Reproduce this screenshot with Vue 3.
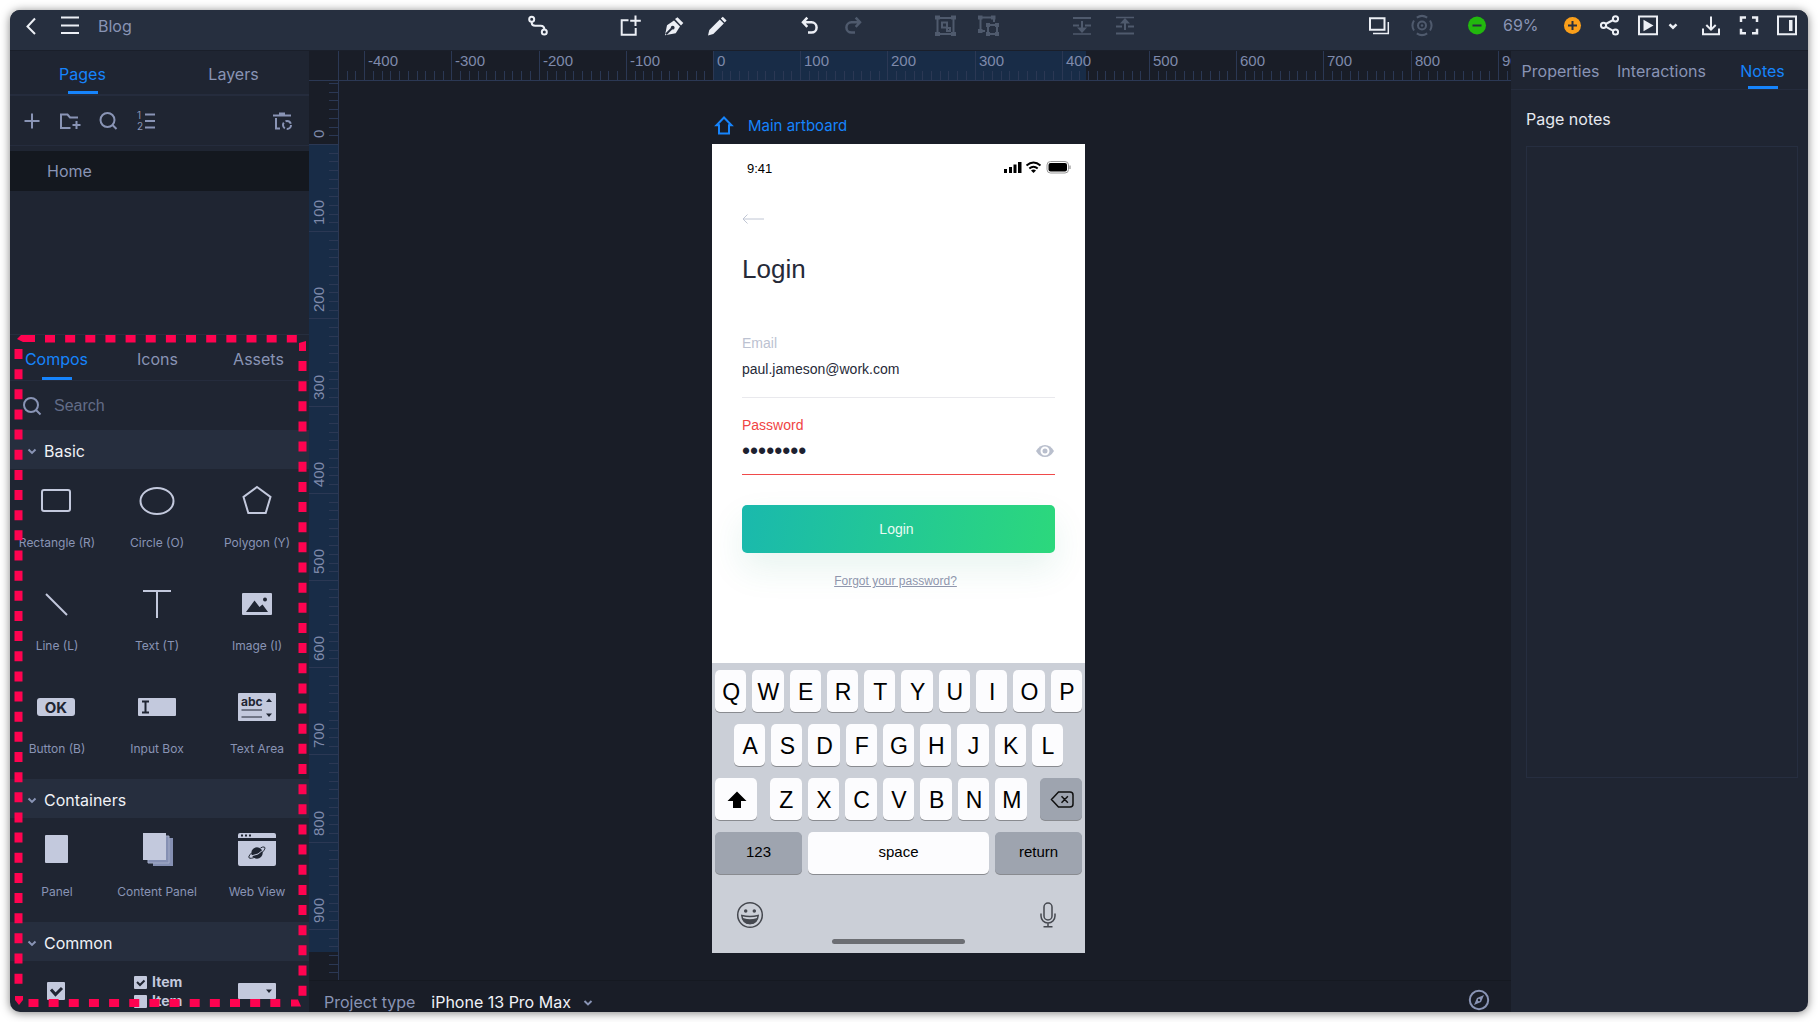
<script setup>
import { computed, onBeforeUnmount, onMounted, ref } from 'vue'

const UNIT = 87.2 / 100
const ORIGIN_X = 374
const ORIGIN_Y = 63
const BOARD_W = 373
const BOARD_H = 808

function buildTicks(origin, length) {
  const ticks = []
  const first = Math.ceil(-origin / UNIT / 10) * 10
  for (let v = first; ; v += 10) {
    const pos = Math.round(origin + v * UNIT)
    if (pos >= length) break
    if (pos > 0) ticks.push({ v, pos, major: v % 100 === 0 })
  }
  return ticks
}

const rulerX = ref(null)
const rulerY = ref(null)
const rulerWidth = ref(0)
const rulerHeight = ref(0)
const xTicks = computed(() => buildTicks(ORIGIN_X, rulerWidth.value))
const yTicks = computed(() => buildTicks(ORIGIN_Y, rulerHeight.value))

function measure() {
  rulerWidth.value = rulerX.value.clientWidth - 30
  rulerHeight.value = rulerY.value.clientHeight
}
onMounted(() => {
  measure()
  window.addEventListener('resize', measure)
})
onBeforeUnmount(() => window.removeEventListener('resize', measure))

const pageTab = ref('Pages')
const libTab = ref('Compos')
const sideTab = ref('Notes')
const notes = ref('')
const query = ref('')
const email = ref('paul.jameson@work.com')
const password = ref('password')
const device = ref('iPhone 13 Pro Max')

const sections = [
  {
    name: 'Basic',
    items: [
      ['rectangle', 'Rectangle (R)'], ['circle', 'Circle (O)'], ['polygon', 'Polygon (Y)'],
      ['line', 'Line (L)'], ['text', 'Text (T)'], ['image', 'Image (I)'],
      ['button', 'Button (B)'], ['input', 'Input Box'], ['textarea', 'Text Area'],
    ],
  },
  { name: 'Containers', items: [['panel', 'Panel'], ['stack', 'Content Panel'], ['web', 'Web View']] },
  { name: 'Common', items: [['check', ''], ['list', ''], ['select', '']] },
]
</script>

<template>
  <div class="window">
    <header class="topbar">
      <div class="left">
        <button class="ib" aria-label="Back"><svg viewBox="0 0 24 24"><path d="M16 4.500 8.500 12.500l7.500 7.500" /></svg></button>
        <button class="ib" aria-label="Menu"><svg viewBox="0 0 24 24"><path d="M3 3.500h18M3 11.500h18M3 19h18" /></svg></button>
        <span class="project">Blog</span>
      </div>
      <div class="tools">
        <div class="set">
          <button class="ib" aria-label="Link"><svg viewBox="0 0 24 24"><circle cx="5.700" cy="5.300" r="2.500" /><circle cx="18.300" cy="18" r="2.500" /><path d="M5.700 8v.8q0 3 3.500 3h5.500q3.600 0 3.600 3.500" /></svg></button>
        </div>
        <div class="set">
          <button class="ib" aria-label="Add artboard"><svg viewBox="0 0 24 24"><path d="M9.500 6.300H2.700v14.400h14V14M16.500 1.500V12M11.200 6.700h10.600" /></svg></button>
          <button class="ib" aria-label="Pen"><svg viewBox="0 0 24 24" class="solid"><path d="M3 21.300 5 11.300 12 6.500l6 6-4.300 6.800z" /><path d="m13 5 2.500-1.800L21.300 9l-2.300 2.500z" /><path class="cut" d="m4 20.300 5.500-5.500" /><circle cx="10.700" cy="13.700" r="1.900" fill="#262f3f" /></svg></button>
          <button class="ib" aria-label="Pencil"><svg viewBox="0 0 24 24" class="solid"><path d="M3 21.500 4.300 16 14.800 5.500l4 4L8.300 20z" /><path d="m15.800 4.500 2-1.800 3.800 3.800-1.900 2z" /></svg></button>
        </div>
        <div class="set">
          <button class="ib" aria-label="Undo"><svg viewBox="0 0 24 24" class="bold"><path d="M9.300 3.700 5 8.300l4.300 4.500M5 8.300h8.500a5 5 0 0 1 0 10.200H10" /></svg></button>
          <button class="ib off" aria-label="Redo"><svg viewBox="0 0 24 24" class="bold"><path d="M14.700 3.700 19 8.300l-4.300 4.500M19 8.300h-8.500a5 5 0 0 0 0 10.200H14" /></svg></button>
        </div>
        <div class="set">
          <button class="ib off" aria-label="Group"><svg viewBox="0 0 24 24"><path d="M3.500 4h16v16h-16z" /><path d="M8 8.500h5v5H8zM13 14h3v3h-3z" /><path class="dots" d="M1 1.500h5v4H1zM17 1.500h5v4h-5zM1 18h5v4H1zM17 18h5v4h-5z" /></svg></button>
          <button class="ib off" aria-label="Ungroup"><svg viewBox="0 0 24 24"><path d="M8 17H3.500V3.500h13.500V8M11 11h9v9h-9z" /><path class="dots" d="M1 1.500h4.500v4H1zM14 1.500h4.500v4H14zM1 15h4.500v4H1zM9 9h4v4H9zM18 9h4v4h-4zM9 18h4v4H9zM18 18h4v4h-4z" /></svg></button>
        </div>
        <div class="set">
          <button class="ib off" aria-label="Send backward"><svg viewBox="0 0 24 24"><path d="M3 4h18M12 7v8M3 11.500h6M15 11.500h6" /><path class="dots" d="M7 13.500h10L12 19z" /><path class="mid-line" d="M3 20h18" /></svg></button>
          <button class="ib off" aria-label="Bring forward"><svg viewBox="0 0 24 24"><path d="M3 19.500h18M12 8v8M3 12.500h6M15 12.500h6" /><path class="dots" d="M7 9.500h10L12 4z" /><path class="mid-line" d="M3 3.500h18" /></svg></button>
        </div>
      </div>
      <div class="right">
        <button class="ib" aria-label="Layers"><svg viewBox="0 0 24 24"><path d="M3 4.300h14.500v11.400H3z" /><path class="mid-line" d="M21.300 8v11.500H6" /></svg></button>
        <button class="ib off gap-before" aria-label="Target"><svg viewBox="0 0 24 24"><circle cx="12" cy="11.500" r="4" /><circle cx="12" cy="11.500" r="1.200" class="dots" /><path d="M6.800 3.600a9.400 9.400 0 0 1 10.400 0M20 6.500a9.400 9.400 0 0 1 0 10M17.200 19.400a9.400 9.400 0 0 1-10.400 0M4 16.500a9.400 9.400 0 0 1 0-10" /></svg></button>
        <div class="zoom">
          <button class="ib" aria-label="Zoom out"><svg viewBox="0 0 24 24"><circle cx="12" cy="11.500" r="9" class="green" /><path class="cut" d="M7.500 11.500h9" /></svg></button>
          <span class="pct">69%</span>
          <button class="ib" aria-label="Zoom in"><svg viewBox="0 0 24 24"><circle cx="12.500" cy="11.500" r="8.500" class="orange" /><path class="cut" d="M8 11.500h9M12.500 7v9" /></svg></button>
        </div>
        <button class="ib" aria-label="Share"><svg viewBox="0 0 24 24"><circle cx="5.500" cy="11.300" r="2.600" /><circle cx="17.500" cy="4.800" r="2.600" /><circle cx="17.500" cy="18" r="2.600" /><path d="m7.700 10 7.500-4M7.700 12.600l7.500 4.200" /></svg></button>
        <div class="play">
          <button class="ib" aria-label="Preview"><svg viewBox="0 0 24 24"><path d="M3 2.500h18v17.700H3z" /><path class="dots" d="M7.500 5.800v11.400L17.500 11.500z" /></svg></button>
          <button class="ib" aria-label="Preview options"><svg viewBox="0 0 24 24" class="bold"><path d="m8.500 10.300 3.500 3.400 3.500-3.400" /></svg></button>
        </div>
        <button class="ib" aria-label="Download"><svg viewBox="0 0 24 24"><path d="M4 14.500v5.700h16v-5.700M12 2.500V15M7.300 11l4.700 4.700 4.700-4.700" /></svg></button>
        <button class="ib" aria-label="Fullscreen"><svg viewBox="0 0 24 24" class="bold"><path d="M9 3.500H4V8M15 3.500H20V8M9 19.300H4v-4.500M15 19.300H20v-4.500" /></svg></button>
        <button class="ib" aria-label="Toggle panel"><svg viewBox="0 0 24 24"><path d="M3 2.500h18v17.700H3z" /><path class="dots" d="M14 6h3.500v11H14z" /></svg></button>
      </div>
    </header>

    <div class="body">
      <aside class="sidebar">
        <section class="pages">
          <div class="tabs">
            <button v-for="t in ['Pages', 'Layers']" :key="t" :class="['tab', { on: pageTab === t }]" @click="pageTab = t">{{ t }}</button>
          </div>
          <div class="page-tools">
            <button class="ib" aria-label="Add page"><svg viewBox="0 0 24 24"><path d="M12 4.500v15M4.500 12h15" /></svg></button>
            <button class="ib" aria-label="Add folder"><svg viewBox="0 0 24 24"><path d="M12.500 19H3V5.500h6.500L12 8.500h8M18.500 12v8M14.500 16h8" /></svg></button>
            <button class="ib" aria-label="Find page"><svg viewBox="0 0 24 24"><circle cx="11.500" cy="11" r="7" /><path d="m16.500 16 4 4" /></svg></button>
            <button class="ib" aria-label="Numbering"><svg viewBox="0 0 24 24"><path d="M11 5.500h10M11 12h10M11 18.500h10" /><text x="3" y="10" font-size="10">1</text><text x="3" y="20.500" font-size="10">2</text></svg></button>
            <button class="ib last" aria-label="Trash"><svg viewBox="0 0 24 24"><path d="M3 6.500h18M9 4.500h6M6 9v10.500h4" /><circle cx="17" cy="16" r="4" stroke-dasharray="6.400 2" /></svg></button>
          </div>
          <a href="#" class="page-row">Home</a>
        </section>

        <section class="library">
          <div class="tabs tall">
            <button v-for="t in ['Compos', 'Icons', 'Assets']" :key="t" :class="['tab', { on: libTab === t }]" @click="libTab = t">{{ t }}</button>
          </div>
          <label class="search">
            <svg viewBox="0 0 24 24"><circle cx="11" cy="11" r="7" /><path d="m16 16 4.500 4.500" /></svg>
            <input v-model="query" type="text" placeholder="Search" aria-label="Search" />
          </label>
          <div v-for="s in sections" :key="s.name">
            <button class="section-head">
              <svg viewBox="0 0 24 24"><path d="m8.500 10.500 3.500 3.400 3.500-3.400" /></svg>{{ s.name }}
            </button>
            <div class="grid">
              <div v-for="[kind, label] in s.items" :key="kind" class="item">
                <svg viewBox="0 0 48 48" class="glyph">
                  <rect v-if="kind === 'rectangle'" x="9" y="13" width="28" height="21" rx="2" class="ln" />
                  <ellipse v-else-if="kind === 'circle'" cx="24" cy="24" rx="16.500" ry="13" class="ln" />
                  <path v-else-if="kind === 'polygon'" d="M24 10 37.500 20 32.700 36H15.300L10.500 20z" class="ln" />
                  <path v-else-if="kind === 'line'" d="m13 14 21 21" class="ln" />
                  <path v-else-if="kind === 'text'" d="M10 11h28M24 11v27" class="ln" />
                  <g v-else-if="kind === 'image'"><rect x="9" y="13" width="30" height="22" rx="1" /><path class="ink" d="m13 32 8.500-11.500 5 6.500 3-2.500 5.500 7.500z" /><circle cx="32" cy="19.500" r="2" class="ink" /></g>
                  <g v-else-if="kind === 'button'"><rect x="4" y="15" width="38" height="18" rx="3" /><text x="23" y="29.500" text-anchor="middle" class="ink strong" font-size="15">OK</text></g>
                  <g v-else-if="kind === 'input'"><rect x="5" y="15" width="38" height="18" rx="1" /><path d="M9 18.500h7M9 29.500h7M12.500 18v12" class="inkln" /></g>
                  <g v-else-if="kind === 'textarea'"><rect x="5" y="10" width="38" height="28" rx="1" /><text x="8" y="22.500" class="ink strong" font-size="12">abc</text><path d="M8.500 27H29M8.500 34H29" class="inkln fine" /><path class="ink" d="m33 19 3-3.500 3 3.500zM33 30.500h6L36 34z" /></g>
                  <rect v-else-if="kind === 'panel'" x="12" y="9" width="23" height="28" rx="1" />
                  <g v-else-if="kind === 'stack'"><path d="M20 12h20v28H20z" fill="#8590b3" /><path d="M15 10h21v27H15z" fill="#8590b3" class="edge" /><rect x="10" y="7" width="23" height="27" /></g>
                  <g v-else-if="kind === 'web'" transform="translate(0 -2)"><path d="M5 14v-3q0-2 2-2h34q2 0 2 2v3zM5 17h38v23q0 2-2 2H7q-2 0-2-2z" /><path d="M8 11.500h2M12 11.500h2M16 11.500h2" class="inkln" /><circle cx="24" cy="29" r="5.700" class="ink" /><path d="M18.500 29c-6 6-1 6.500 5 3.500s10.500-9 7.500-9.500q-1.500-.3-3.500 1" class="inkln fine" /><path d="M18 32q8-1 12-6" stroke="#c3c9dd" fill="none" /></g>
                  <g v-else-if="kind === 'check'"><rect x="14" y="13" width="18" height="18" rx="1" /><path d="m18 20.500 4.500 5 6.500-6.500" class="inkln heavy" /></g>
                  <g v-else-if="kind === 'list'"><rect x="1" y="7" width="13" height="13" rx="1" /><rect x="1" y="26" width="13" height="13" rx="1" /><path d="m4 13 3 3 4.500-4.500" class="inkln" /><text x="19" y="18" class="strong" font-size="14">Item</text><text x="19" y="37" class="strong" font-size="14">Item</text></g>
                  <g v-else><rect x="5" y="14" width="38" height="16" rx="1" /><path class="ink" d="M33 20.500h6L36 24z" /></g>
                </svg>
                <span>{{ label }}</span>
              </div>
            </div>
          </div>
          <svg class="marquee" aria-hidden="true">
            <path d="M7 4 11 0h14v7H13z" />
            <line x1="35" y1="3.500" x2="288" y2="3.500" />
            <path d="M289 8l7-2v10h-7z" />
            <line x1="292.500" y1="26" x2="292.500" y2="98%" />
            <line x1="8.500" y1="14" x2="8.500" y2="97%" />
            <svg y="100%" overflow="visible">
              <path d="M5-16h8v4l-4 5-4-5z" />
              <line x1="18.500" y1="-9" x2="272" y2="-9" />
              <path d="M281-12.500h7l3 7h-10z" />
            </svg>
          </svg>
        </section>
      </aside>

      <main class="stage">
        <div ref="rulerX" class="ruler-x">
          <div class="corner"></div>
          <svg>
            <rect :x="ORIGIN_X" y="0" :width="BOARD_W" height="29" class="range" />
            <template v-for="t in xTicks" :key="t.v">
              <line :x1="t.pos" :x2="t.pos" :y1="t.major ? 0 : 20" y2="29" />
              <text v-if="t.major" :x="t.pos + 4" y="15">{{ t.v }}</text>
            </template>
          </svg>
        </div>
        <div class="middle">
          <div ref="rulerY" class="ruler-y">
            <svg>
              <rect x="0" :y="ORIGIN_Y" width="29" :height="BOARD_H" class="range" />
              <template v-for="t in yTicks" :key="t.v">
                <line :y1="t.pos" :y2="t.pos" :x1="t.major ? 0 : 20" x2="29" />
                <text v-if="t.major" :transform="`translate(15 ${t.pos - 6}) rotate(-90)`">{{ t.v }}</text>
              </template>
            </svg>
          </div>
          <div class="canvas">
            <div class="board-wrap">
              <div class="board-name">
                <svg viewBox="0 0 24 24"><path d="M12 3.500 4.500 11.200H7V19.500h10v-8.300h2.500z" /></svg>Main artboard
              </div>
              <div class="board">
                <div class="status">
                  <span>9:41</span>
                  <svg viewBox="0 0 67 13">
                    <path d="M0 8h3v4H0zM5 6h3v6H5zM9.500 3.500h3V12h-3zM14 1h3.500v11H14z" />
                    <g fill="none" stroke="#000" stroke-width="2"><path d="M22.500 4.500q7-6 14 0M25.300 7.500q4.200-3.600 8.400 0" /></g><path d="m27 9.500q2.500-2 5 0L29.500 12z" />
                    <rect x="43" y=".5" width="21.500" height="11.500" rx="3.500" fill="none" stroke="#999" /><path d="M66 4.500v3.500" stroke="#aaa" stroke-width="1.500" /><rect x="44.500" y="2" width="18.500" height="8.500" rx="2" />
                  </svg>
                </div>
                <button class="back" aria-label="Back"><svg viewBox="0 0 24 12"><path d="M22 6H1M5.500 1.500 1 6l4.500 4.500" /></svg></button>
                <h1>Login</h1>
                <div class="field">
                  <label for="email">Email</label>
                  <input id="email" v-model="email" type="text" />
                </div>
                <div class="field bad">
                  <label for="pw">Password</label>
                  <div class="pw">
                    <input id="pw" v-model="password" type="password" />
                    <svg viewBox="0 0 20 14"><path d="M1 7q3.500-6 9-6t9 6q-3.500 6-9 6T1 7z" fill="#b9bfcd" /><circle cx="10" cy="7" r="3.500" fill="#b9bfcd" stroke="#fff" stroke-width="2" /></svg>
                  </div>
                </div>
                <button class="submit">Login</button>
                <a href="#" class="forgot">Forgot your password?</a>
                <div class="keyboard">
                  <div class="keys"><button v-for="k in 'QWERTYUIOP'" :key="k" class="key">{{ k }}</button></div>
                  <div class="keys inset"><button v-for="k in 'ASDFGHJKL'" :key="k" class="key">{{ k }}</button></div>
                  <div class="keys">
                    <button class="key side" aria-label="Shift"><svg viewBox="0 0 24 20"><path d="M12 1.500 21.500 11H16v7H8v-7H2.500z" /></svg></button>
                    <div class="keys mid"><button v-for="k in 'ZXCVBNM'" :key="k" class="key">{{ k }}</button></div>
                    <button class="key side dark" aria-label="Delete"><svg viewBox="0 0 24 20" class="line"><path d="M8.500 2H20q3 0 3 3v9q0 3-3 3H8.500L1.500 9.500zM11.500 6.300l6.400 6.400M17.900 6.300l-6.400 6.400" /></svg></button>
                  </div>
                  <div class="keys words">
                    <button class="key dark">123</button>
                    <button class="key space">space</button>
                    <button class="key dark">return</button>
                  </div>
                  <div class="kb-foot">
                    <svg viewBox="0 0 28 28" class="face"><circle cx="14" cy="14" r="12.300" /><circle cx="9.700" cy="10" r="1" class="f" /><circle cx="18.300" cy="10" r="1" class="f" /><path d="M5.800 14.500q8.200 2.200 16.400 0Q21.500 22.500 14 22.500T5.800 14.500z" /><path d="M7.500 18q6.500 2 13 0-2 4.500-6.500 4.500T7.500 18z" class="f" /></svg>
                    <svg viewBox="0 0 28 28" class="face"><rect x="10" y="2" width="8" height="17" rx="4" /><path d="M7 12.500V15a7 7 0 0 0 14 0v-2.500M14 22v3.500M9.500 25.800h9" /></svg>
                  </div>
                  <div class="home-bar"></div>
                </div>
              </div>
            </div>
          </div>
        </div>
        <footer class="footer">
          <label for="device">Project type</label>
          <div class="pick">
            <select id="device" v-model="device"><option>iPhone 13 Pro Max</option></select>
            <svg viewBox="0 0 24 24"><path d="m8.500 10 3.500 3.400 3.500-3.400" /></svg>
          </div>
          <button class="ib compass" aria-label="Navigator"><svg viewBox="0 0 24 24"><circle cx="12" cy="12" r="9.200" /><path d="m7 17 3-7 7-3-3 7z" class="needle" /><circle cx="12" cy="12" r="1.200" fill="#191d27" stroke="none" /></svg></button>
        </footer>
      </main>

      <aside class="inspector">
        <div class="tabs side">
          <button v-for="t in ['Properties', 'Interactions', 'Notes']" :key="t" :class="['tab', { on: sideTab === t }]" @click="sideTab = t">{{ t }}</button>
        </div>
        <div class="notes">
          <label for="notes">Page notes</label>
          <textarea id="notes" v-model="notes"></textarea>
        </div>
      </aside>
    </div>
  </div>
</template>

<style>
body { margin: 0; background: #fff; }
#app { height: 100vh; box-sizing: border-box; padding: 10px; overflow: hidden; }
</style>

<style scoped>
.window, .window * { box-sizing: border-box; }
.window { display: flex; flex-direction: column; height: 100%; border-radius: 10px; overflow: hidden; background: #1f2532; box-shadow: 0 1px 10px rgba(0, 0, 0, .5); color: #8994b5; font: 16px/20px Inter, "Liberation Sans", sans-serif; }
button { margin: 0; padding: 0; border: 0; background: none; color: inherit; font: inherit; cursor: pointer; }
input, textarea, select { margin: 0; padding: 0; border: 0; outline: 0; background: none; color: inherit; font: inherit; }
svg { display: block; }
a { color: inherit; text-decoration: none; }

.ib { width: 24px; height: 24px; flex: none; }
.ib svg { width: 24px; height: 24px; fill: none; stroke: currentColor; stroke-width: 2; }
.ib svg.solid { fill: currentColor; stroke: none; }
.ib svg.bold { stroke-width: 2.500; }
.ib .dots { fill: currentColor; stroke: none; }
.ib .mid-line { stroke-width: 1.500; }
.ib .cut { stroke: #262f3f; stroke-width: 2; }
.ib .green { fill: #22b80e; stroke: none; }
.ib .orange { fill: #fa9f1a; stroke: none; }
.ib text { fill: currentColor; stroke: none; font-family: Inter, sans-serif; }
.ib.off { color: #4f5a6d; }

.topbar { display: flex; flex: none; height: 41px; padding: 4px 9px 0; background: #262f3f; border-bottom: 1px solid #1a1f2a; color: #eceff5; }
.left { display: flex; gap: 15px; width: 507px; }
.project { margin-left: 1px; padding-top: 2px; color: #8994b5; }
.tools { display: flex; gap: 69px; }
.set { display: flex; gap: 19px; }
.right { display: flex; gap: 14px; margin-left: auto; }
.gap-before { margin-left: 5px; }
.zoom { display: flex; gap: 14px; margin-left: 17px; }
.pct { width: 43px; padding-top: 1px; color: #8994b5; }
.play { display: flex; gap: 1px; }

.body { display: flex; flex: 1; min-height: 0; }
.sidebar { display: flex; flex-direction: column; flex: none; width: 299px; overflow: hidden; }
.pages { flex: none; height: 283px; }
.tabs { display: flex; height: 45px; border-bottom: 2px solid #252c3d; }
.tab { position: relative; flex: 1 1 0; padding-top: 2px; }
.tab:first-child { margin-left: -3px; }
.tab.on { color: #1684fc; }
.tab.on::after { content: ""; position: absolute; left: 50%; bottom: 0; width: 30px; height: 3px; margin-left: -15px; background: #1684fc; }
.tabs.tall { height: 46px; margin-left: -1px; border-bottom-width: 1px; }
.page-tools { display: flex; gap: 14px; height: 50px; padding: 13px 15px 0 10px; border-bottom: 1px solid #252c3d; }
.page-tools .last { margin-left: auto; }
.page-row { display: block; height: 40px; margin-top: 5px; padding: 10px 37px; background: #14181f; }

.library { position: relative; flex: 1; min-height: 0; overflow: hidden; border-top: 1px solid #262e3e; }
.search { display: flex; align-items: center; height: 49px; padding-left: 10px; }
.search svg { width: 24px; height: 24px; fill: none; stroke: currentColor; stroke-width: 2; }
.search input { flex: 1; min-width: 0; margin-left: 10px; font: 16px/20px "Liberation Sans", sans-serif; }
.search input::placeholder { color: #626c87; opacity: 1; }
.section-head { display: flex; align-items: center; width: 100%; height: 39px; padding: 2px 0 0 10px; background: #262e3e; color: #f0f2f7; }
.section-head svg { width: 24px; height: 24px; fill: none; stroke: #8994b5; stroke-width: 2; }
.grid { display: grid; grid-template-columns: repeat(3, 100px); margin-left: -3px; padding-bottom: 1px; }
.item { display: flex; flex-direction: column; align-items: center; height: 103px; padding-top: 8px; font-size: 12px; line-height: 18px; white-space: nowrap; }
.glyph { width: 48px; height: 48px; margin-bottom: 9px; fill: #c3c9dd; overflow: visible; flex: none; }
.ln { fill: none; stroke: #c3c9dd; stroke-width: 2; }
.ink { fill: #1f2532; }
.inkln { fill: none; stroke: #1f2532; stroke-width: 2; }
.inkln.fine { stroke-width: 1; }
.inkln.heavy { stroke-width: 3; }
.edge { stroke: #a4adc8; stroke-width: 1; }
.strong { font-weight: 700; font-family: Inter, sans-serif; }
.marquee { position: absolute; left: 0; top: 0; width: 100%; height: 100%; fill: #ff0350; pointer-events: none; }
.marquee line { stroke: #ff0350; stroke-width: 8; stroke-dasharray: 10 10.150; }

.stage { display: flex; flex-direction: column; flex: 1; min-width: 0; background: #191d27; }
.ruler-x { display: flex; flex: none; height: 30px; border-bottom: 1px solid #2b3854; }
.corner { flex: none; width: 30px; border-right: 1px solid #2b3854; }
.ruler-x svg { flex: 1; min-width: 0; height: 29px; }
.ruler-x line, .ruler-y line { stroke: #2b3854; stroke-width: 1; shape-rendering: crispEdges; }
.ruler-x text, .ruler-y text { fill: #7f8aab; font: 15px "Liberation Sans", sans-serif; }
.range { fill: #182c47; }
.middle { display: flex; flex: 1; min-height: 0; overflow: hidden; }
.ruler-y { flex: none; width: 30px; border-right: 1px solid #2b3854; }
.ruler-y svg { width: 29px; height: 100%; }
.canvas { flex: 1; min-width: 0; padding: 32px 0 0 373px; }
.board-wrap { width: 374px; }
.board-name { display: flex; align-items: center; gap: 12px; height: 26px; color: #1684fc; font-size: 15px; margin-bottom: 5px; }
.board-name svg { width: 24px; height: 24px; fill: none; stroke: currentColor; stroke-width: 2; }
.board { display: flex; flex-direction: column; width: 373px; height: 809px; padding: 0 30px; background: #fff; color: #262a38; font: 14px/18px "Liberation Sans", sans-serif; }
.status { display: flex; justify-content: space-between; align-items: center; height: 18px; margin: 16px -16px 0 5px; color: #000; font-size: 13px; }
.status svg { width: 67px; height: 13px; margin-bottom: 4px; }
.back { display: flex; margin-top: 35px; height: 12px; }
.back svg { width: 24px; height: 12px; fill: none; stroke: #c0c6d4; }
h1 { margin: 28px 0 0; font-size: 26px; line-height: 32px; font-weight: 400; }
.field { display: flex; flex-direction: column; border-bottom: 1px solid #e9e9ed; }
.field > label { color: #bcc2d1; }
.field input { width: 100%; height: 22px; }
h1 + .field { margin-top: 49px; height: 64px; gap: 6px; }
.field.bad { margin-top: 18px; height: 59px; gap: 6px; border-color: #f04a4a; }
.field.bad > label { color: #f04444; }
.pw { display: flex; align-items: center; }
.pw input { flex: 1; min-width: 0; font-size: 23px; color: #1d2130; }
.pw svg { width: 20px; height: 14px; }
.submit { flex: none; height: 48px; margin-top: 30px; padding-right: 4px; border-radius: 5px; background: linear-gradient(100deg, #1ab9ad, #2cd87c); box-shadow: 0 16px 34px rgba(30, 150, 110, .1); color: #e9fbf3; }
.forgot { align-self: center; margin-top: 19px; margin-right: 6px; color: #8f96ad; font-size: 12px; text-decoration: underline; }
.keyboard { flex: none; display: flex; flex-direction: column; gap: 12px; height: 290px; margin: auto -30px 0; padding: 7px 3px 0; background: #cbcfd7; color: #000; }
.keys { display: flex; gap: 6px; }
.keys.inset { padding: 0 19px; }
.keys.mid { flex: 1; padding: 0 7px; }
.key { display: flex; align-items: center; justify-content: center; flex: 1 1 0; min-width: 0; height: 42px; padding: 1px 0 0 1px; border-radius: 5px; background: #fcfcfe; box-shadow: 0 1px 0 #898b90; font-size: 23px; }
.key svg { width: 24px; height: 20px; }
.key svg.line { fill: none; stroke: #111; stroke-width: 1.500; }
.key.side { flex: 0 0 42px; }
.key.dark { background: #9ea4af; }
.words .key { flex: 0 0 87px; padding: 0 0 2px; font-size: 15px; }
.words .space { flex: 1; }
.kb-foot { display: flex; justify-content: space-between; margin: 15px 20px 0 21px; }
.face { width: 28px; height: 28px; fill: none; stroke: #45484f; stroke-width: 1.500; }
.face .f { fill: #45484f; }
.home-bar { align-self: center; width: 133px; height: 5px; margin-top: -2px; border-radius: 3px; background: #6c6e73; }

.footer { display: flex; flex: none; height: 32px; padding: 11px 20px 0 15px; border-top: 1px solid #151921; overflow: hidden; }
.pick { display: flex; margin-left: 16px; color: #f0f2f7; height: 20px; }
.pick select { appearance: none; }
.pick svg { width: 24px; height: 24px; margin-left: 5px; margin-top: -1px; fill: none; stroke: #8994b5; stroke-width: 2; }
.compass { margin: -4px 0 0 auto; }
.compass .needle { fill: currentColor; stroke: none; }

.inspector { flex: none; width: 297px; overflow: hidden; }
.tabs.side { height: 39px; margin-right: -5px; border-bottom-width: 1px; }
.tabs.side .tab:first-child { margin-left: -1px; }
.notes { display: flex; flex-direction: column; padding: 19px 10px 0 15px; gap: 17px; color: #e6e9f0; }
.notes textarea { display: block; width: 100%; height: 632px; border: 1px solid #262e40; resize: none; }
</style>
